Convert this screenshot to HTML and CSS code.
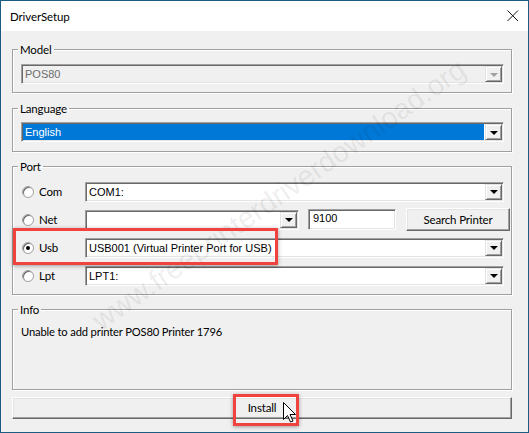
FILE: index.html
```html
<!DOCTYPE html>
<html>
<head>
<meta charset="utf-8">
<link rel="stylesheet" href="styles.css">
</head>
<body>
<div class="window">
  <div class="titlebar">
    <span class="title">DriverSetup</span>
    <svg class="close" width="12" height="12" viewBox="0 0 12 12"><path d="M0.5 0.5L11 11M11 0.5L0.5 11" stroke="#111" stroke-width="1" fill="none"/></svg>
  </div>
  <div class="client">
    <fieldset class="group g-model">
      <legend>Model</legend>
      <div class="combo disabled"><span class="value">POS80</span><span class="drop"><i class="tri"></i></span></div>
    </fieldset>
    <fieldset class="group g-lang">
      <legend>Language</legend>
      <div class="combo"><span class="value selected">English</span><span class="drop"><i class="tri"></i></span></div>
    </fieldset>
    <fieldset class="group g-port">
      <legend>Port</legend>
      <div class="row">
        <span class="radio"><span class="circle"></span><span class="rlabel">Com</span></span>
        <div class="combo grow"><span class="value">COM1:</span><span class="drop"><i class="tri"></i></span></div>
      </div>
      <div class="row">
        <span class="radio"><span class="circle"></span><span class="rlabel">Net</span></span>
        <div class="combo net"><span class="value"></span><span class="drop"><i class="tri"></i></span></div>
        <div class="field">9100</div>
        <div class="btn search">Search Printer</div>
      </div>
      <div class="row">
        <span class="radio"><span class="circle checked"></span><span class="rlabel">Usb</span></span>
        <div class="combo grow"><span class="value">USB001 (Virtual Printer Port for USB)</span><span class="drop"><i class="tri"></i></span></div>
      </div>
      <div class="row">
        <span class="radio"><span class="circle"></span><span class="rlabel">Lpt</span></span>
        <div class="combo grow"><span class="value">LPT1:</span><span class="drop"><i class="tri"></i></span></div>
      </div>
    </fieldset>
    <fieldset class="group g-info">
      <legend>Info</legend>
      <p class="info-text">Unable to add printer POS80 Printer 1796</p>
    </fieldset>
    <div class="btn install">Install</div>
  </div>
  <div class="watermark">www.freeprinterdriverdownload.org</div>
  <div class="hl hl-usb"></div>
  <div class="hl hl-install"></div>
  <svg class="cursor" width="13" height="21" viewBox="0 0 13 21"><path d="M0.5 0.5V17.5L4.5 13.5L7.5 20L10 19L7 12.5H12.5Z" fill="#fff" stroke="#000" stroke-width="1" stroke-linejoin="miter"/></svg>
</div>
</body>
</html>
```
FILE: styles.css
```css
html, body {
  margin: 0;
  padding: 0;
  background: #f0f0f0;
}
.window {
  position: relative;
  box-sizing: border-box;
  width: 529px;
  height: 433px;
  border: 1px solid #1c5c82;
  background: #f0f0f0;
  overflow: hidden;
  font-family: Lato, "Noto Sans", sans-serif;
  font-size: 11px;
  letter-spacing: -0.15px;
  color: #000;
}
.titlebar {
  height: 30px;
  background: #fff;
  display: flex;
  align-items: center;
  justify-content: space-between;
  padding: 0 9px 0 9px;
}
.title {
  font-size: 11.5px;
  letter-spacing: -0.1px;
  color: #000;
}
.close {
  display: block;
  margin-top: -1px;
}
.client {
  display: flex;
  flex-direction: column;
  padding: 11px 16px 0 11px;
  gap: 7px;
}
.group {
  margin: 0;
  border: 1px solid #a0a0a0;
  box-shadow: inset 1px 1px 0 #fff, 1px 1px 0 #fff;
  padding: 7px 7px 8px 8px;
  min-width: 0;
}
.group legend {
  padding: 0 2px;
  margin-left: -3px;
  font-size: 11.5px;
  line-height: 15px;
  color: #000;
}
.g-model { margin-bottom: 1px; }
.g-lang { padding-top: 6px; padding-bottom: 9px; }
.g-port { padding-top: 7px; padding-bottom: 8px; display: flex; flex-direction: column; gap: 7px; }
.g-info { height: 88px; box-sizing: border-box; padding-top: 7px; }

.combo {
  box-sizing: border-box;
  height: 20px;
  display: flex;
  align-items: stretch;
  background: #fff;
  border: 1px solid;
  border-color: #a0a0a0 #fff #fff #a0a0a0;
  box-shadow: inset 1px 1px 0 #696969, inset -1px -1px 0 #e3e3e3;
  padding: 1px;
  letter-spacing: 0;
}
.combo.disabled { background: #f0f0f0; }
.combo .value {
  flex: 1;
  font-family: "Liberation Sans", Arial, sans-serif;
  font-size: 11px;
  line-height: 16px;
  padding-left: 2px;
  white-space: nowrap;
  overflow: hidden;
  color: #000;
}
.combo.disabled .value { color: #6d6d6d; }
.combo .value.selected {
  background: #0078d7;
  color: #fff;
  margin-right: 1px;
}
.drop {
  box-sizing: border-box;
  width: 17px;
  background: #f0f0f0;
  border: 1px solid;
  border-color: #e3e3e3 #696969 #696969 #e3e3e3;
  box-shadow: inset 1px 1px 0 #fff, inset -1px -1px 0 #a0a0a0;
  display: flex;
  align-items: center;
  justify-content: center;
}
.tri {
  width: 0;
  height: 0;
  border-left: 4px solid transparent;
  border-right: 4px solid transparent;
  border-top: 4px solid #000;
  margin-top: 1px;
}
.combo.disabled .tri { border-top-color: #a0a0a0; }

.row {
  display: flex;
  align-items: center;
  height: 21px;
}
.radio {
  width: 64px;
  display: flex;
  align-items: center;
  flex: none;
}
.circle {
  box-sizing: border-box;
  width: 12px;
  height: 12px;
  border-radius: 50%;
  background: #fff;
  border: 1px solid #a0a0a0;
  box-shadow: inset 1px 1px 0 #696969;
  margin-right: 4px;
  margin-left: 1px;
  display: flex;
  align-items: center;
  justify-content: center;
}
.circle.checked::after {
  content: "";
  width: 4px;
  height: 4px;
  border-radius: 50%;
  background: #000;
}
.rlabel {
  font-size: 11.5px;
  line-height: 14px;
  padding-left: 1px;
}
.combo.grow { flex: 1; }
.combo.net { width: 214px; flex: none; }
.field {
  box-sizing: border-box;
  width: 88px;
  height: 21px;
  margin-left: 9px;
  background: #fff;
  border: 1px solid;
  border-color: #a0a0a0 #fff #fff #a0a0a0;
  box-shadow: inset 1px 1px 0 #696969, inset -1px -1px 0 #e3e3e3;
  font-family: "Liberation Sans", Arial, sans-serif;
  font-size: 11px;
  letter-spacing: 0;
  line-height: 17px;
  padding-left: 4px;
}
.btn {
  box-sizing: border-box;
  background: #f0f0f0;
  border: 1px solid;
  border-color: #fff #696969 #696969 #fff;
  box-shadow: inset -1px -1px 0 #a0a0a0, inset 1px 1px 0 #e3e3e3;
  display: flex;
  align-items: center;
  justify-content: center;
  font-size: 11.5px;
}
.search {
  width: 104px;
  height: 23px;
  margin-left: 10px;
  margin-right: -7px;
}
.info-text {
  margin: 0;
  font-size: 11.2px;
  line-height: 16px;
}
.install {
  height: 22px;
  padding-bottom: 1px;
}
.hl {
  position: absolute;
  box-sizing: border-box;
  border: 3px solid #f0433f;
  box-shadow: 0 1px 4px rgba(0,0,0,0.35);
}
.hl-usb { left: 12px; top: 227px; width: 265px; height: 37px; }
.hl-install { left: 232px; top: 393px; width: 66px; height: 32px; }
.cursor {
  position: absolute;
  left: 282px;
  top: 401px;
}
.watermark {
  position: absolute;
  left: 278px;
  top: 194px;
  transform: translate(-50%, -50%) rotate(-35deg);
  font-family: "Liberation Sans", Arial, sans-serif;
  font-size: 29px;
  letter-spacing: 0;
  color: rgba(0,0,0,0.08);
  white-space: nowrap;
  pointer-events: none;
}
```
